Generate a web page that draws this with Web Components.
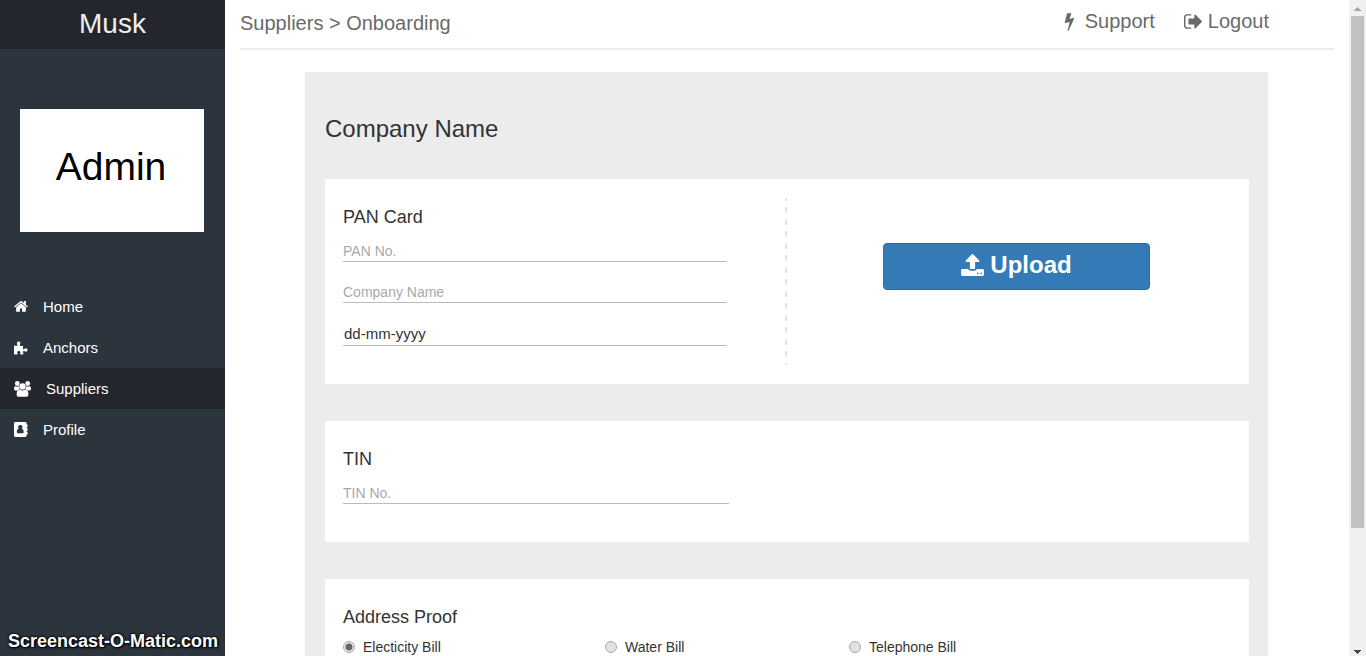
<!DOCTYPE html>
<html lang="en">
<head>
<meta charset="utf-8">
<title>Suppliers &gt; Onboarding</title>
<style>
  body { margin: 0; font-family: "Liberation Sans", Arial, sans-serif; color: #333; background: #fff; }
</style>
</head>
<body>
<supplier-app></supplier-app>
<script>
const ICONS = {
  home: ['64 256 1664 1408', '<path d="M1472 992v480q0 26-19 45t-45 19h-384v-384h-256v384h-384q-26 0-45-19t-19-45v-480q0-1 .5-3t.5-3l575-474 575 474q1 2 1 6zm223-69l-62 74q-8 9-21 11h-3q-13 0-21-7l-692-577-692 577q-12 8-24 7-13-2-21-11l-62-74q-8-10-7-23.5t11-21.5l719-599q32-26 76-26t76 26l244 204v-195q0-14 9-23t23-9h192q14 0 23 9t9 23v408l219 182q10 8 11 21.5t-7 23.5z"/>'],
  puzzle: ['0 0 15 14', '<path d="M0 4.400q2 .5 3.600 .2q.6-.3-.1-1.300q-.5-.9-.3-1.800q.4-1.400 1.800-1.400t1.800 1.400q.2 .9-.4 1.800q-.7 1 0 1.300q1.500 .3 3.400-.1q-.3 1.900-.1 3.500q.3 .8 1.200 .2q1-.8 2-.8q1.500 .2 1.600 1.800q-.1 1.600-1.600 1.800q-1 0-2-.8q-.9-.5-1.100 .2q-.1 1.600 .3 3.300q-2 .4-3.400 .1q-.7-.3-.1-1.100q.5-.7 .4-1.300q-.4-1.200-1.800-1.200t-1.800 1.200q-.1 .6 .4 1.300q.6 .8-.1 1.100q-1.700 .3-3.700 0z"/>'],
  users: ['0 0 17 16', '<circle cx="3.300" cy="2.500" r="2.400"/><circle cx="13.700" cy="2.500" r="2.400"/><path d="M1.400 5q2 1.200 3.600 .2q-.3 1.800 .7 3q-1.400 .2-2.300 1.400h-1.700q-1.700 0-1.700-1.700q0-2.100 1.400-2.900zM15.600 5q-2 1.200-3.600 .2q.3 1.800-.7 3q1.400 .2 2.300 1.400h1.700q1.700 0 1.700-1.700q0-2.100-1.400-2.900z"/><circle cx="8.500" cy="5.500" r="3.200"/><path d="M5.800 8.600q2.700 1.900 5.400 0q3.200 .3 3.200 4.600q0 2.600-2.600 2.600h-6.600q-2.600 0-2.600-2.600q0-4.300 3.200-4.600z"/>'],
  book: ['0 0 15 16', '<path fill-rule="evenodd" d="M1.500 0h10.500q1.500 0 1.500 1.500v1h.6q.4 0 .4 .4v2.200q0 .4-.4 .4h-.6v1h.6q.4 0 .4 .4v2.200q0 .4-.4 .4h-.6v1h.6q.4 0 .4 .4v2.200q0 .4-.4 .4h-.6v1q0 1.500-1.500 1.500h-10.500q-1.500 0-1.500-1.500v-13q0-1.500 1.500-1.500zM6.750 3.200a2.350 2.350 0 0 0-1.700 4q-2 .2-2 3.400q0 1.400 1.200 1.400h5q1.200 0 1.200-1.400q0-3.200-2-3.400a2.350 2.350 0 0 0-1.700-4z"/>'],
  bolt: ['440 0 912 1792', '<path d="M1333 566q18 20 7 44l-540 1157q-13 25-42 25-4 0-14-2-17-5-25.500-19t-4.500-30l197-808-406 101q-4 1-12 1-18 0-31-11-18-15-13-39l201-825q4-14 16-23t28-9h328q19 0 32 12.500t13 29.500q0 8-5 18l-171 463 396-98q8-2 12-2 19 0 34 15z"/>'],
  exit: ['64 256 1568 1280', '<path d="M704 1440q0 4 1 20t.5 26.500-3 23.500-10 19.500-20.500 6.500h-320q-119 0-203.500-84.500t-84.500-203.500v-704q0-119 84.500-203.500t203.500-84.500h320q13 0 22.500 9.500t9.500 22.500q0 4 1 20t.5 26.500-3 23.500-10 19.500-20.500 6.500h-320q-66 0-113 47t-47 113v704q0 66 47 113t113 47h312l11.500 1 11.500 3 8 5.500 7 9 2 13.500zm928-544q0 26-19 45l-544 544q-19 19-45 19t-45-19-19-45v-288h-448q-26 0-45-19t-19-45v-384q0-26 19-45t45-19h448v-288q0-26 19-45t45-19 45 19l544 544q19 19 19 45z"/>'],
  upload: ['64 64 1664 1600', '<path d="M1344 1472q0-26-19-45t-45-19-45 19-19 45 19 45 45 19 45-19 19-45zm256 0q0-26-19-45t-45-19-45 19-19 45 19 45 45 19 45-19 19-45zm128-224v320q0 40-28 68t-68 28h-1472q-40 0-68-28t-28-68v-320q0-40 28-68t68-28h427q21 56 70.500 92t110.500 36h256q61 0 110.500-36t70.500-92h427q40 0 68 28t28 68zm-325-648q-17 40-59 40h-256v448q0 26-19 45t-45 19h-256q-26 0-45-19t-19-45v-448h-256q-42 0-59-40-17-39 14-69l448-448q18-19 45-19t45 19l448 448q31 30 14 69z"/>'],
  up: ['0 0 7 4', '<path d="M3 0h1v1h1v1h1v1h1v1h-7v-1h1v-1h1v-1h1z"/>'],
  down: ['0 0 7 4', '<path d="M0 0h7v1h-1v1h-1v1h-1v1h-1v-1h-1v-1h-1v-1h-1z"/>']
};

class Base extends HTMLElement {
  constructor() { super(); this.attachShadow({ mode: 'open' }); }
  connectedCallback() { this.shadowRoot.innerHTML = this.view(); }
}
const define = (name, view) => customElements.define(name, class extends Base { view() { return view(this); } });

define('ui-icon', el => {
  const [box, body] = ICONS[el.getAttribute('name')];
  return `<style>:host{display:block;flex:none} svg{display:block;width:100%;height:100%;fill:currentColor}</style>
  <svg viewBox="${box}" aria-hidden="true">${body}</svg>`;
});

define('nav-item', el => `<style>
  :host { display: block; }
  a { display: flex; align-items: center; gap: 15px; height: 41px; padding: 0 14px; color: #fff; font-size: 15px; text-decoration: none; }
  :host([active]) a { background: #24262d; }
  ui-icon { width: 14px; height: 14px; }
  ui-icon[name="users"] { width: 17px; height: 16px; }
  ui-icon[name="book"] { height: 15px; }
  </style><a href="#"><ui-icon name="${el.getAttribute('icon')}"></ui-icon><slot></slot></a>`);

define('side-bar', () => `<style>
  :host { display: flex; flex-direction: column; background: #2c343d; color: #fff; }
  .brand { height: 49px; line-height: 47px; background: #24262d; text-align: center; font-size: 28px; color: #eee; }
  .avatar { display: flex; align-items: center; justify-content: center; height: 123px; margin: 60px 21px 54px 20px; padding: 0 2px 8px 0; box-sizing: border-box; background: #fff; color: #000; font-size: 39px; }
  footer { margin-top: auto; padding: 0 8px 5px; line-height: 20px; font-size: 18px; font-weight: bold; white-space: nowrap; text-shadow: 0 0 2px #000, 0 0 3px #000, 1px 1px 2px #000; }
  </style>
  <div class="brand">Musk</div>
  <div class="avatar">Admin</div>
  <nav><slot></slot></nav>
  <footer>Screencast-O-Matic.com</footer>`);

define('top-bar', () => `<style>
  :host { display: flex; justify-content: space-between; height: 48px; border-bottom: 2px solid #ececec; font-size: 20px; line-height: 46px; color: #6a6a6a; }
  nav { display: flex; gap: 29px; margin-right: 65px; line-height: 42px; }
  a { display: flex; align-items: center; height: 42px; color: inherit; text-decoration: none; }
  a:first-child { gap: 10px; } a:last-child { gap: 6px; }
  ui-icon[name="bolt"] { width: 11px; height: 19px; }
  ui-icon[name="exit"] { width: 18px; height: 15px; }
  </style>
  <div><slot></slot></div>
  <nav><a href="#"><ui-icon name="bolt"></ui-icon>Support</a><a href="#"><ui-icon name="exit"></ui-icon>Logout</a></nav>`);

define('form-card', el => `<style>
  :host { display: grid; grid-template-columns: 1fr 1fr; background: #fff; padding: 19px 0; }
  :host([wide]) { grid-template-columns: 1fr; }
  .main { padding: 9px 58px 19px 18px; }
  :host([split]) .main { padding-right: 60px; background: repeating-linear-gradient(#e5e5e5 0 3px, transparent 3px 9px, #e5e5e5 9px 12px) right / 2px 100% no-repeat; }
  h2 { margin: 0 0 10px; font-size: 18px; line-height: 20px; font-weight: normal; }
  .side { display: flex; justify-content: center; align-items: center; padding: 0 3px 31px 0; }
  :host([wide]) .side { display: none; }
  </style>
  <div class="main"><h2>${el.getAttribute('heading')}</h2><slot></slot></div>
  <div class="side"><slot name="side"></slot></div>`);

define('text-field', el => `<style>
  :host { display: block; padding-top: 4px; margin-bottom: 16px; }
  :host(:last-of-type) { margin-bottom: 0; }
  input { display: block; box-sizing: border-box; width: 100%; height: 21px; padding: 0; border: 0; border-bottom: 1px solid #bbb; border-radius: 0; outline: 0; background: none; font: 14px "Liberation Sans", Arial, sans-serif; color: #333; }
  input::placeholder { color: #a9a9a9; opacity: 1; }
  :host([date]) input { height: 23px; padding: 0 0 1px 1px; font-size: 15px; }
  :host([date]) input::placeholder { color: #333; }
  </style><input type="text" aria-label="${el.getAttribute('label')}" placeholder="${el.getAttribute('hint')}">`);

define('upload-button', () => `<style>
  :host { display: block; width: 58%; }
  button { display: flex; align-items: center; justify-content: center; gap: 6px; width: 100%; height: 47px; padding: 0 0 3px; border: 1px solid #2e6da4; border-radius: 4px; background: #337ab7; color: #fff; font: bold 24px "Liberation Sans", Arial, sans-serif; }
  ui-icon { width: 23px; height: 22px; }
  </style><button type="button"><ui-icon name="upload"></ui-icon><span><slot></slot></span></button>`);

define('bill-options', () => `<style>
  :host { display: grid; grid-template-columns: 262px 244px 1fr; }
  label { display: flex; align-items: center; gap: 8px; height: 20px; font-size: 14px; }
  input { appearance: none; box-sizing: border-box; width: 12px; height: 12px; margin: 0; border: 1px solid #aaa; border-radius: 50%; background: #e2e2e2; }
  input:checked { background: radial-gradient(circle, #666 0 3px, #e6e6e6 4px); }
  </style>
  <label><input type="radio" name="bill" checked>Electicity Bill</label>
  <label><input type="radio" name="bill">Water Bill</label>
  <label><input type="radio" name="bill">Telephone Bill</label>`);

define('scroll-track', () => `<style>
  :host { display: flex; flex-direction: column; align-items: center; box-sizing: border-box; padding: 7px 0 2px; background: #f0f0f0; }
  ui-icon { width: 7px; height: 4px; color: #a3a3a9; }
  ui-icon:last-child { color: #504050; }
  .track { flex: 1; width: 13px; margin: 5px 0 12px; }
  .thumb { height: calc(100% * 14 / 17); background: #c1c1c1; }
  </style><ui-icon name="up"></ui-icon><div class="track"><div class="thumb"></div></div><ui-icon name="down"></ui-icon>`);

define('supplier-app', () => `<style>
  :host { display: grid; grid-template-columns: 225px 1fr 17px; height: 100vh; overflow: hidden; }
  main { overflow-y: auto; scrollbar-width: none; padding: 0 15px; }
  .panel { display: flex; flex-direction: column; gap: 37px; margin: 22px 66px 40px 65px; padding: 44px 19px 44px 20px; background: #ececec; }
  h1 { margin: 0; font-size: 24px; line-height: 26px; font-weight: normal; }
  </style>
  <side-bar>
    <nav-item icon="home">Home</nav-item>
    <nav-item icon="puzzle">Anchors</nav-item>
    <nav-item icon="users" active>Suppliers</nav-item>
    <nav-item icon="book">Profile</nav-item>
  </side-bar>
  <main>
    <top-bar>Suppliers &gt; Onboarding</top-bar>
    <section class="panel">
      <h1>Company Name</h1>
      <form-card heading="PAN Card" split>
        <text-field label="PAN number" hint="PAN No."></text-field>
        <text-field label="Company name" hint="Company Name"></text-field>
        <text-field label="Date" hint="dd-mm-yyyy" date></text-field>
        <upload-button slot="side">Upload</upload-button>
      </form-card>
      <form-card heading="TIN"><text-field label="TIN number" hint="TIN No."></text-field></form-card>
      <form-card heading="Address Proof" wide><bill-options></bill-options></form-card>
    </section>
  </main>
  <scroll-track></scroll-track>`);
</script>
</body>
</html>
